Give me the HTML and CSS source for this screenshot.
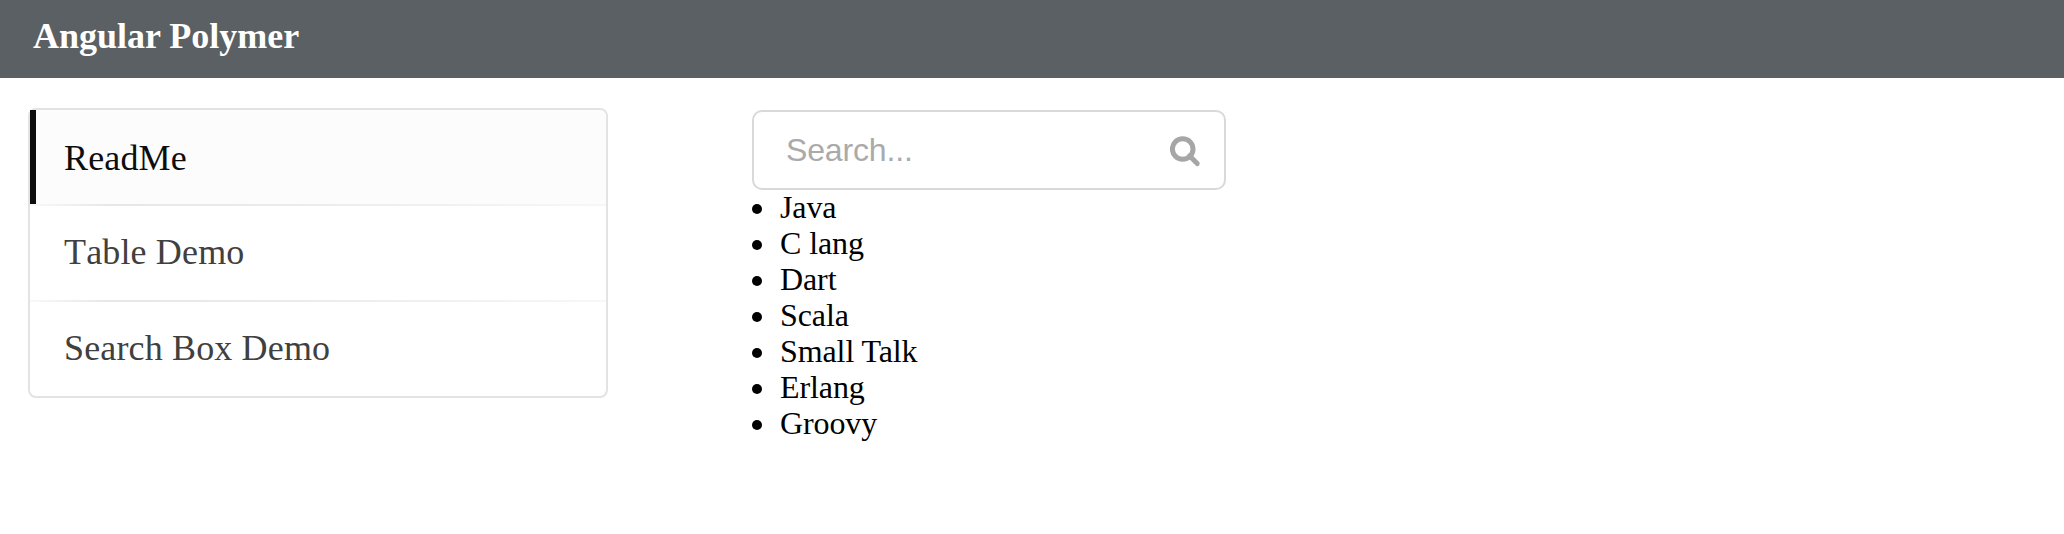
FILE: index.html
```html
<!DOCTYPE html>
<html lang="en">
<head>
<meta charset="utf-8">
<title>Angular Polymer</title>
<link rel="stylesheet" href="styles.css">
</head>
<body>
<header class="topbar"><h1 class="brand">Angular Polymer</h1></header>
<main class="content">
  <nav class="menu">
    <a class="item active">ReadMe</a>
    <a class="item">Table Demo</a>
    <a class="item">Search Box Demo</a>
  </nav>
  <section class="panel">
    <div class="search">
      <input class="search-input" type="text" placeholder="Search...">
      <svg class="search-icon" width="32" height="32" viewBox="0 0 32 32" fill="none" stroke="#a6a6a6">
        <circle cx="12.7" cy="13" r="10.3" stroke-width="5"/>
        <path d="M19.5 19.8L27.2 27.6" stroke-width="5" stroke-linecap="round"/>
      </svg>
    </div>
    <ul class="results">
      <li>Java</li>
      <li>C lang</li>
      <li>Dart</li>
      <li>Scala</li>
      <li>Small Talk</li>
      <li>Erlang</li>
      <li>Groovy</li>
    </ul>
  </section>
</main>
</body>
</html>
```
FILE: styles.css
```css
* { box-sizing: border-box; }
body {
  margin: 0;
  background: #fff;
  color: #000;
  font-family: "Liberation Serif", "Times New Roman", serif;
}
.topbar {
  height: 78px;
  padding: 15px 33px 0;
  background: #5b6064;
}
.brand {
  margin: 0;
  color: #fff;
  font-size: 36px;
  line-height: 42px;
}
.content {
  display: flex;
  align-items: flex-start;
  gap: 144px;
  padding: 30px 28px 0;
}
.menu {
  width: 580px;
  border: 2px solid #e3e3e3;
  border-radius: 8px;
}
.item {
  display: block;
  height: 94px;
  padding: 2px 0 0 34px;
  color: #404040;
  font-size: 36px;
  line-height: 93px;
  font-kerning: none;
  letter-spacing: 0.15px;
}
.item + .item {
  height: 96px;
  background: linear-gradient(to right, #f8f8f8, #e7e7e7 14%, #ececec 50%, #f7f7f7) top / 100% 2px no-repeat;
}
.item.active {
  padding-left: 28px;
  border-left: 6px solid #0d0d0d;
  border-radius: 0 6px 0 0;
  background: #fcfcfc;
  color: #0d0d0d;
}
.panel {
  width: 474px;
  padding-top: 2px;
}
.search {
  display: flex;
  align-items: center;
  height: 80px;
  padding: 0 22px 0 32px;
  border: 2px solid #d9d9d9;
  border-radius: 10px;
}
.search-input {
  flex: 1;
  min-width: 0;
  padding: 1px 0 0;
  border: 0;
  outline: 0;
  background: none;
  color: #333;
  font: 32px "Liberation Sans", Arial, sans-serif;
  letter-spacing: -0.15px;
}
.search-input::placeholder { color: #aaa; }
.search-icon {
  flex: none;
  margin-top: 3px;
}
.results {
  margin: -1px 0 0;
  padding: 0;
  list-style: none;
  font-size: 32px;
  line-height: 36px;
  letter-spacing: -0.1px;
}
.results li {
  display: flex;
  align-items: center;
  gap: 18px;
}
.results li::before {
  content: "";
  width: 10px;
  height: 10px;
  margin-top: 3px;
  border-radius: 50%;
  background: #000;
}
```
